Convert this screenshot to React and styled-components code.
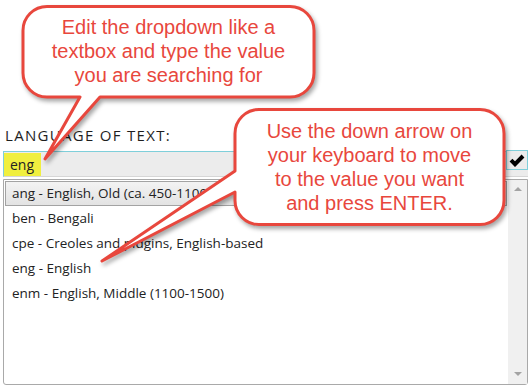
import React from 'react';
import styled, { createGlobalStyle } from 'styled-components';

const GlobalStyle = createGlobalStyle`
  html, body {
    margin: 0;
    padding: 0;
    background: #ffffff;
  }
  body {
    font-family: 'Open Sans', 'DejaVu Sans', sans-serif;
  }
`;

const red = '#e8473d';

const languages = [
  'ang - English, Old (ca. 450-1100)',
  'ben - Bengali',
  'cpe - Creoles and pidgins, English-based',
  'eng - English',
  'enm - English, Middle (1100-1500)'
];

const Page = styled.div`
  position: relative;
  width: 530px;
  height: 386px;
  overflow: hidden;
  box-sizing: border-box;
  padding: 126px 2px 0 3px;
`;

const Label = styled.div`
  font-size: 15px;
  line-height: 19px;
  letter-spacing: 1.3px;
  color: #1e1e1e;
  padding-left: 2px;
  margin-bottom: 6px;
`;

const InputRow = styled.div`
  position: relative;
  display: flex;
  align-items: center;
  height: 26px;
  box-sizing: border-box;
  background: #ececec;
  border: 1px solid #7fcfda;
  border-right: none;
  border-bottom-color: #d6d6d6;
`;

const Typed = styled.span`
  display: flex;
  align-items: center;
  height: 23px;
  padding: 0 7px 0 6px;
  background: #f0ef3f;
  font-size: 14px;
  color: #222;
`;

const CheckBox = styled.div`
  position: absolute;
  right: 0;
  top: -2px;
  width: 22px;
  height: 20px;
  box-sizing: border-box;
  border: 1px solid #7fcfda;
  background: #ececec;
  display: flex;
  align-items: center;
  justify-content: center;
`;

const List = styled.div`
  display: flex;
  margin-top: 2px;
  height: 206px;
  box-sizing: border-box;
  border: 1px solid #a9a9a9;
  border-radius: 0 0 3px 3px;
  background: #fff;
`;

const Items = styled.div`
  flex: 1;
  padding: 1px 1px 0 1px;
`;

const Item = styled.div`
  height: 25px;
  box-sizing: border-box;
  border: 1px solid ${p => (p.active ? '#a3a3a3' : 'transparent')};
  background: ${p => (p.active ? 'linear-gradient(#f3f3f3, #e3e3e3)' : 'transparent')};
  padding-left: 6px;
  font-size: 13.5px;
  line-height: 23px;
  color: #222;
  white-space: nowrap;
`;

const Scrollbar = styled.div`
  width: 19px;
  background: #f0f0f0;
  display: flex;
  flex-direction: column;
  justify-content: space-between;
  align-items: center;
  padding: 7px 0 8px;
`;

const Arrow = styled.div`
  width: 0;
  height: 0;
  border-left: 4px solid transparent;
  border-right: 4px solid transparent;
  ${p =>
    p.down
      ? 'border-top: 4px solid #a3a3a3;'
      : 'border-bottom: 4px solid #a3a3a3;'}
`;

const Overlay = styled.svg`
  position: absolute;
  left: 0;
  top: 0;
  pointer-events: none;
  filter: drop-shadow(2px 3px 2px rgba(0, 0, 0, 0.35));
`;

const BubbleText = styled.div`
  position: absolute;
  left: ${p => p.left}px;
  top: ${p => p.top}px;
  width: ${p => p.width}px;
  text-align: center;
  font-family: 'Liberation Sans', Arial, sans-serif;
  font-size: 20px;
  line-height: 24px;
  color: ${red};
  pointer-events: none;
`;

const bubbleOne =
  'M47,6.5 H290 A24,24 0 0 1 314,30.5 V73 A24,24 0 0 1 290,97 H100 L45,159 L80,97 H47 A24,24 0 0 1 23,73 V30.5 A24,24 0 0 1 47,6.5 Z';
const bubbleTwo =
  'M259,109.5 H480 A24,24 0 0 1 504,133.5 V200.5 A24,24 0 0 1 480,224.5 H259 A24,24 0 0 1 235,200.5 V192 L102,261 L235,171 V133.5 A24,24 0 0 1 259,109.5 Z';

export default function App() {
  return (
    <>
      <GlobalStyle />
      <Page>
        <Label>LANGUAGE OF TEXT:</Label>
        <InputRow>
          <Typed>eng</Typed>
          <CheckBox>
            <svg width="16" height="13" viewBox="0 0 16 13">
              <path d="M2 6.2 L6 10.2 L14 2" fill="none" stroke="#000" strokeWidth="4" />
            </svg>
          </CheckBox>
        </InputRow>
        <List>
          <Items>
            {languages.map((lang, i) => (
              <Item key={lang} active={i === 0}>
                {lang}
              </Item>
            ))}
          </Items>
          <Scrollbar>
            <Arrow />
            <Arrow down />
          </Scrollbar>
        </List>

        <Overlay width="530" height="386" viewBox="0 0 530 386">
          <path d={bubbleOne} fill="#fff" stroke={red} strokeWidth="3" strokeLinejoin="round" />
          <path d={bubbleTwo} fill="#fff" stroke={red} strokeWidth="3" strokeLinejoin="round" />
        </Overlay>
        <BubbleText left={23} top={15} width={291}>
          Edit the dropdown like a<br />
          textbox and type the value<br />
          you are searching for
        </BubbleText>
        <BubbleText left={235} top={119} width={269}>
          Use the down arrow on<br />
          your keyboard to move<br />
          to the value you want<br />
          and press ENTER.
        </BubbleText>
      </Page>
    </>
  );
}
